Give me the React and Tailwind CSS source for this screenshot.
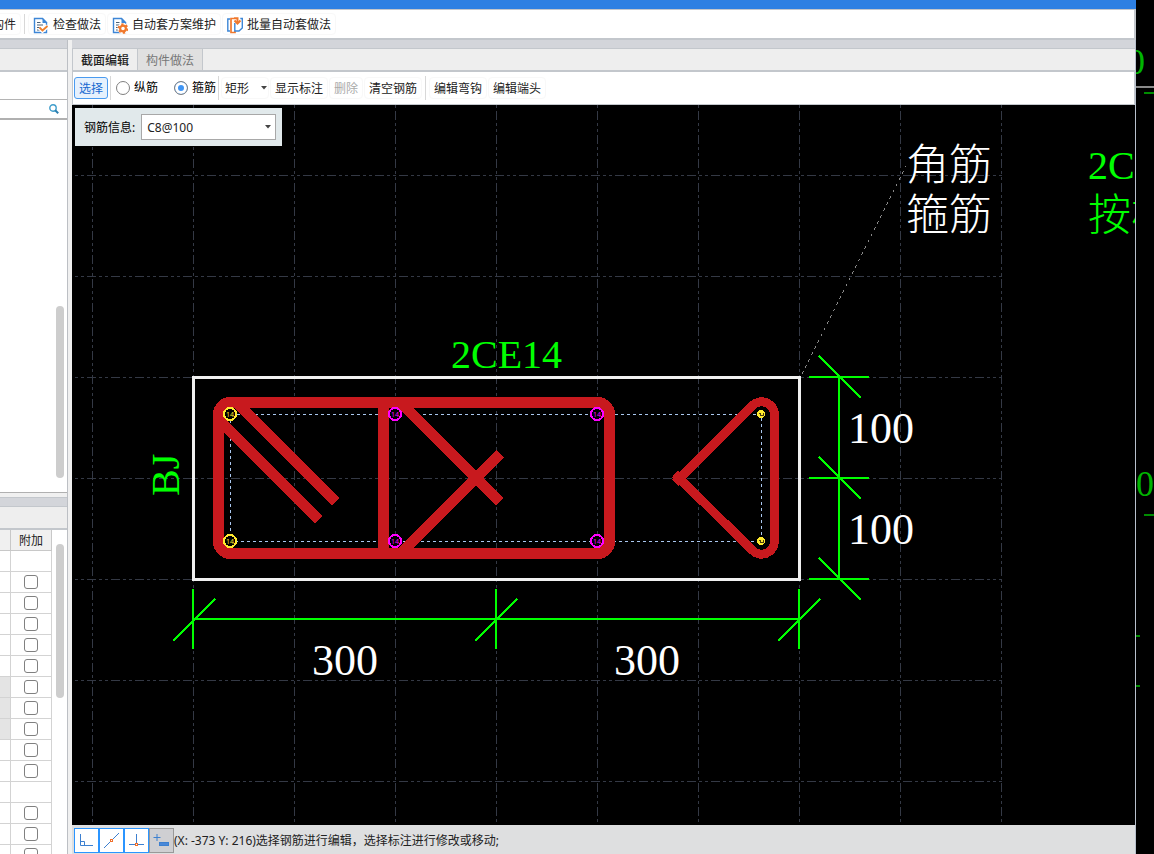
import React, { useState } from 'react';

const rows = [
  { check: false }, { check: true }, { check: true }, { check: true }, { check: true },
  { check: true }, { check: true, shaded: true }, { check: true, shaded: true }, { check: true, shaded: true },
  { check: true }, { check: true }, { check: false }, { check: true }, { check: true }, { check: true },
];

const gridX = [92.5, 193.5, 294.5, 395.5, 496.5, 597.5, 698.5, 799.5, 900.5, 1001.5];
const gridY = [175.5, 276.5, 377.5, 478.5, 579.5, 680.5, 781.5];

const bars = [
  { x: 230, y: 414, color: '#ffe92e' },
  { x: 230, y: 541, color: '#ffe92e' },
  { x: 395, y: 414, color: '#ff00ff' },
  { x: 395, y: 541, color: '#ff00ff' },
  { x: 597, y: 414, color: '#ff00ff' },
  { x: 597, y: 541, color: '#ff00ff' },
];

function PageShape() {
  return (
    <>
      <path d="M1.5 1.5h8l4 4v10h-12z" fill="#fff" stroke="#3d86d6" strokeWidth="1.4" />
      <path d="M9.5 1v5h5z" fill="#3d86d6" />
      <path d="M4 5.5h3.5M4 8h6M4 10.5h4M4 13h3" stroke="#4a6076" fill="none" />
    </>
  );
}

function CheckIcon() {
  return (
    <svg width="16" height="17" viewBox="0 0 16 17">
      <PageShape />
      <path d="M6.500 10.500l3 3 5-4.500" stroke="#fff" strokeWidth="4.500" fill="none" />
      <path d="M6.500 10.500l3 3 5-4.500" stroke="#f0802c" strokeWidth="1.800" fill="none" />
    </svg>
  );
}

function GearIcon() {
  return (
    <svg width="16" height="17" viewBox="0 0 16 17">
      <PageShape />
      <circle cx="11" cy="11.500" r="5.500" fill="#fff" />
      <circle cx="11" cy="11.500" r="2.900" fill="#fff" stroke="#f0782c" strokeWidth="2.200" />
      <circle cx="11" cy="11.500" r="4.400" fill="none" stroke="#f0782c" strokeWidth="1.800" strokeDasharray="2.300 2.300" />
    </svg>
  );
}

function BatchIcon() {
  return (
    <svg width="16" height="17" viewBox="0 0 16 17" fill="none">
      <path d="M3 2H.8v12H3" stroke="#3d86d6" strokeWidth="1.400" />
      <path d="M7 1.500H4v14h4V14" stroke="#f0782c" strokeWidth="1.700" />
      <path d="M7.800 6v8H12l3.300-3V1.500h-2" stroke="#3d86d6" strokeWidth="1.400" />
      <path d="M7 1.300h3.500V6" stroke="#f0782c" strokeWidth="2" />
      <path d="M7.500 3.500l3 3 3-3" stroke="#f0782c" strokeWidth="2" />
    </svg>
  );
}

function ToolButton({ icon, children, disabled }) {
  return (
    <button
      disabled={disabled}
      className="flex h-[22px] shrink-0 items-center gap-1 rounded-sm border border-[#f8f8f8] px-1 pt-[2px] whitespace-nowrap text-[#222] disabled:text-[#aaa]"
    >
      {icon}
      {children}
    </button>
  );
}

function Arrow() {
  return (
    <svg width="6" height="4" viewBox="0 0 6 4" className="pointer-events-none absolute right-[5px] top-1/2 -translate-y-1/2">
      <path d="M0 0h6L3 3.500z" fill="#444" />
    </svg>
  );
}

function RadioOption({ label, value, current, onChange }) {
  return (
    <label className="flex shrink-0 items-center gap-1 whitespace-nowrap text-black">
      <input
        type="radio"
        name="barType"
        checked={current === value}
        onChange={() => onChange(value)}
        className="h-[14px] w-[14px] appearance-none rounded-full border border-[#808080] bg-white checked:bg-[#3f95f5] checked:shadow-[inset_0_0_0_3px_white]"
      />
      {label}
    </label>
  );
}

function Sidebar() {
  return (
    <aside className="flex w-[68px] shrink-0 flex-col border-r border-[#bcbfc4] bg-white">
      <div className="h-[9px] shrink-0 border-b border-[#c3c7cc] bg-[#d3d5da]" />
      <div className="h-[23px] shrink-0 border-b-2 border-[#c3c7cc] bg-[#eee]" />
      <div className="h-[28px] shrink-0 border-b border-[#b4b4b4]" />
      <div className="flex h-[20px] shrink-0 items-center border-b-2 border-[#b0b0b0] pr-2">
        <input type="text" aria-label="搜索" className="h-full w-full min-w-0 outline-none" />
        <svg width="10" height="10" viewBox="0 0 10 10" className="shrink-0">
          <circle cx="4" cy="4" r="3.200" fill="none" stroke="#3f9dcb" strokeWidth="1.400" />
          <path d="M6.200 6.200L9.200 9.200" stroke="#2b7fb0" strokeWidth="2" />
        </svg>
      </div>
      <div className="flex min-h-0 flex-1 justify-end border-b border-[#b0b0b0] pr-[3px]">
        <div className="mt-auto mb-[14px] h-[172px] w-2 rounded-full bg-[#cdcdcd]" />
      </div>
      <div className="flex h-[361px] shrink-0 flex-col overflow-hidden">
        <div className="h-1 shrink-0 bg-[#f0f0f0]" />
        <div className="h-[10px] shrink-0 border-y border-[#c3c7cc] bg-[#d3d5da]" />
        <div className="h-[23px] shrink-0 border-b-2 border-[#c3c7cc] bg-[#eee]" />
        <div className="flex">
          <table className="w-[52px] shrink-0 table-fixed border-separate border-spacing-0">
            <thead>
              <tr className="h-[21px] bg-[#f0f0f0]">
                <th className="w-[11px] border-r border-b border-[#c8c8c8]"></th>
                <th className="border-r border-b border-[#c8c8c8] p-0 pt-[2px] font-normal text-[#222]">附加</th>
              </tr>
            </thead>
            <tbody>
              {rows.map((row, index) => (
                <tr key={index} className="h-[21px]">
                  <td className={row.shaded ? 'border-r border-b border-[#d3d3d3] bg-[#e4e4e4] p-0' : 'border-r border-b border-[#d3d3d3] p-0'}></td>
                  <td className="border-r border-b border-[#d3d3d3] p-0">
                    {row.check && (
                      <input
                        type="checkbox"
                        aria-label="附加"
                        className="mx-auto block h-[14px] w-[14px] appearance-none rounded-[3px] border border-[#808080] bg-white checked:bg-[#3f95f5]"
                      />
                    )}
                  </td>
                </tr>
              ))}
            </tbody>
          </table>
          <div className="mt-[14px] ml-1 h-[154px] w-2 rounded-full bg-[#cdcdcd]" />
        </div>
      </div>
    </aside>
  );
}

function SectionDrawing() {
  return (
    <svg className="h-full w-full" shapeRendering="crispEdges" fill="none">
      {/* drawing units are window pixels, shifted to the canvas corner */}
      <g transform="translate(-72 -105)">
        <g stroke="#343945" strokeDasharray="9 3 3 3 3 3">
          {gridX.map((x) => (
            <line key={x} x1={x} x2={x} y1="105" y2="822" strokeDashoffset="18" />
          ))}
          {gridY.map((y) => (
            <line key={y} x1="75" x2="1002" y1={y} y2={y} strokeDashoffset="12" />
          ))}
        </g>

        <path d="M802 374L906 166" stroke="#888" strokeDasharray="3 4" />
        <rect x="193.5" y="377.5" width="606" height="202" stroke="#f0f0f0" strokeWidth="3" />
        <rect x="230.5" y="414.5" width="531" height="127" stroke="#a9c7ef" strokeDasharray="3 3" />

        {/* stirrups */}
        <g stroke="#c8191e" strokeWidth="11">
          <rect x="218.5" y="402.5" width="391" height="151" rx="12" />
          <path d="M383.5 402V553" />
          <path d="M236 402L336 502M219 420L319 520" />
          <path d="M400 402L500 502M401 553L500 454" />
          <path d="M675 483L752 406A13 13 0 0 1 774.500 414V541A13 13 0 0 1 752 550L675 474" strokeWidth="9" />
        </g>

        {bars.map((bar) => (
          <g key={`${bar.x}-${bar.y}`}>
            <circle cx={bar.x} cy={bar.y} r="6" stroke={bar.color} strokeWidth="2" fill="#000" />
            <text x={bar.x} y={bar.y + 3} textAnchor="middle" fontSize="7" fill={bar.color}>14</text>
          </g>
        ))}
        {[414, 541].map((y) => (
          <g key={y}>
            <circle cx="761" cy={y} r="4" fill="#ffe92e" />
            <path d={`M759 ${y - 1}h1v2h3v-2`} stroke="#4a3a10" />
          </g>
        ))}

        {/* dimension lines */}
        <g stroke="#00ff00" strokeWidth="2">
          <path d="M839 377V579M809 377H869M809 478H869M809 579H869" />
          <path d="M819 356L861 398M819 457L861 499M819 558L861 600" />
          <path d="M193 619H799M193 589V649M496 589V649M799 589V649" />
          <path d="M173 641L215 599M475 641L517 599M778 641L820 599" />
        </g>

        <g fontFamily="'Liberation Serif', 'Noto Sans CJK SC', serif" fontSize="44" fill="#fff">
          <text x="848" y="443">100</text>
          <text x="848" y="544">100</text>
          <text x="312" y="675">300</text>
          <text x="614" y="675">300</text>
          <text x="906" y="180" fontWeight="300" fontSize="43">角筋</text>
          <text x="906" y="230" fontWeight="300" fontSize="43">箍筋</text>
        </g>
        <g fontFamily="'Liberation Serif', 'Noto Sans CJK SC', serif" fontSize="40" fill="#00ff00">
          <text x="451" y="368">2CE14</text>
          <text transform="translate(179 496) rotate(-90)">BJ</text>
          <text x="1088" y="179">2CE14</text>
          <text x="1088" y="230" fontWeight="300" fontSize="43">按构</text>
        </g>
      </g>
    </svg>
  );
}

function StatusBar() {
  const snap = 'flex h-[25px] w-[25px] items-center justify-center border border-[#2b95ff] bg-white';
  return (
    <footer className="flex h-[29px] shrink-0 items-center bg-[#dedfe0] pt-[2px] pl-[2px] whitespace-nowrap text-[#222]">
      <button aria-label="正交" className={snap}>
        <svg width="15" height="15" fill="none" stroke="#3d80d0">
          <path d="M1.500 1v11.500H14M1.500 8.500h4v4" />
        </svg>
      </button>
      <button aria-label="中点" className={snap}>
        <svg width="15" height="15" fill="none" stroke="#3d80d0">
          <path d="M0 15L15 0" />
          <rect x="6.500" y="6.500" width="2" height="2" stroke="#f0702c" fill="#fff" />
        </svg>
      </button>
      <button aria-label="垂点" className={snap}>
        <svg width="15" height="15" fill="none" stroke="#3d80d0">
          <path d="M7.500 1v11M0 11.500h15" />
          <rect x="6.500" y="10.500" width="2" height="2" stroke="#f0702c" fill="#fff" />
        </svg>
      </button>
      <button aria-label="动态输入" className="flex h-[25px] w-[25px] items-center justify-center border border-[#999] bg-[#cfcfd2]">
        <svg width="17" height="15" fill="none" stroke="#3d80d0">
          <path d="M.5 4.500h7M4 1v7" />
          <rect x="6.500" y="9.500" width="9" height="3" fill="#4a88d8" />
        </svg>
      </button>
      <span>(X: -373 Y: 216)选择钢筋进行编辑，选择标注进行修改或移动;</span>
    </footer>
  );
}

function App() {
  const [barType, setBarType] = useState('stirrup');

  return (
    <div className="flex h-screen overflow-hidden bg-black font-['Noto_Sans','Noto_Sans_CJK_SC',sans-serif] text-xs">
      <div className="flex min-w-0 flex-1 flex-col">
        <div className="h-[9px] shrink-0 bg-[#2d80e3]" />
        <header className="flex h-[31px] shrink-0 items-center gap-px overflow-hidden border-t border-r-2 border-b-2 border-[#c3c7cc] bg-white">
          <div className="-ml-[13px] flex">
            <ToolButton>构件</ToolButton>
          </div>
          <div className="mx-[2px] h-5 w-px bg-[#d8d8d8]" />
          <ToolButton icon={<CheckIcon />}>检查做法</ToolButton>
          <ToolButton icon={<GearIcon />}>自动套方案维护</ToolButton>
          <ToolButton icon={<BatchIcon />}>批量自动套做法</ToolButton>
        </header>

        <div className="flex min-h-0 flex-1">
          <Sidebar />
          <div className="w-1 shrink-0 bg-[#f0f0f0]" />
          <main className="flex min-w-0 flex-1 flex-col border-r border-[#b8c0cc]">
            <div className="h-[9px] shrink-0 border-b border-[#c3c7cc] bg-[#d3d5da]" />
            <nav className="flex h-[23px] shrink-0 border-b-2 border-l border-[#c3c7cc] bg-[#eee]">
              <button className="border-r border-[#c3c7cc] px-2 pt-[2px] font-medium text-[#222]">截面编辑</button>
              <button className="border-r border-[#c3c7cc] bg-[#e0e0e0] px-2 pt-[2px] text-[#777]">构件做法</button>
            </nav>
            <div className="flex h-[33px] shrink-0 items-center gap-px border-r border-b border-l border-[#c3c7cc] bg-white pl-px">
              <button className="h-[22px] shrink-0 rounded-[3px] border border-[#4a9bf0] bg-[#e6f1fd] px-1 pt-[2px] text-[#1568d0]">选择</button>
              <div className="mx-px h-6 w-px bg-[#d8d8d8]" />
              <div className="ml-[3px] flex gap-4">
                <RadioOption label="纵筋" value="longitudinal" current={barType} onChange={setBarType} />
                <RadioOption label="箍筋" value="stirrup" current={barType} onChange={setBarType} />
              </div>
              <div className="mx-px h-6 w-px bg-[#d8d8d8]" />
              <div className="relative w-12 shrink-0">
                <select aria-label="箍筋形状" className="h-[22px] w-full appearance-none rounded-sm border border-[#f8f8f8] bg-white pt-[2px] pl-[3px] text-[#222]">
                  <option>矩形</option>
                </select>
                <svg width="6" height="4" viewBox="0 0 6 4" className="pointer-events-none absolute right-[2px] top-1/2 -translate-y-1/2">
                  <path d="M0 0h6L3 3.500z" fill="#444" />
                </svg>
              </div>
              <ToolButton>显示标注</ToolButton>
              <ToolButton disabled>删除</ToolButton>
              <ToolButton>清空钢筋</ToolButton>
              <div className="mx-[2px] h-6 w-px bg-[#d8d8d8]" />
              <ToolButton>编辑弯钩</ToolButton>
              <ToolButton>编辑端头</ToolButton>
            </div>

            <div className="relative min-h-0 flex-1 overflow-hidden bg-black">
              <SectionDrawing />
              <div className="absolute top-[3px] left-[3px] flex h-[38px] items-center gap-[6px] bg-[#e1e9eb] pr-[6px] pl-[9px]">
                <label htmlFor="barInfo" className="pt-[2px] text-black">钢筋信息:</label>
                <div className="relative w-[135px]">
                  <select id="barInfo" className="h-[26px] w-full appearance-none border border-[#a8a8a8] bg-white pt-[2px] pl-[5px] text-[#222]">
                    <option>C8@100</option>
                  </select>
                  <Arrow />
                </div>
              </div>
            </div>
            <StatusBar />
          </main>
        </div>
      </div>

      {/* the drawing window behind this dialog */}
      <div className="w-[18px] shrink-0 overflow-hidden bg-black">
        <svg className="h-full w-full" shapeRendering="crispEdges">
          <g fontFamily="'Liberation Serif', serif" fontSize="36" fill="#00b400">
            <text x="-9" y="74">0</text>
            <text x="0" y="496">0</text>
          </g>
          <path d="M0 87H18" stroke="#8a8a8a" strokeWidth="2" />
          <path d="M8 93H18M8 515H18M0 636H4M0 686H4" stroke="#008c00" strokeWidth="2" />
        </svg>
      </div>
    </div>
  );
}

export default App;
